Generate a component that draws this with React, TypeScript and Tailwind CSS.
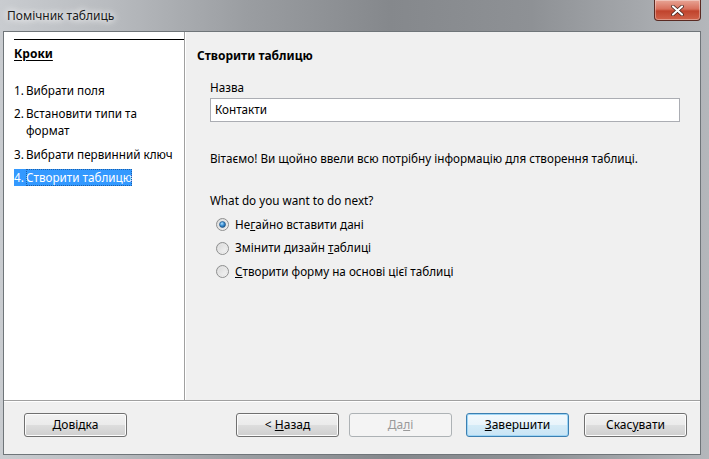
import type { ReactNode } from 'react';

const FONT = "font-['Noto_Sans','Open_Sans',sans-serif]";

function Radio({ checked }: { checked?: boolean }) {
    return (
        <svg width="13" height="13" viewBox="0 0 13 13" className="shrink-0">
            <defs>
                <linearGradient id="rb" x1="0" y1="0" x2="1" y2="1">
                    <stop offset="0" stopColor="#d4d4d4" />
                    <stop offset="1" stopColor="#fafafa" />
                </linearGradient>
                <radialGradient id="rd" cx="0.4" cy="0.35" r="0.7">
                    <stop offset="0" stopColor="#b6e2ff" />
                    <stop offset="0.5" stopColor="#3a8fd3" />
                    <stop offset="1" stopColor="#164f86" />
                </radialGradient>
            </defs>
            <circle cx="6.5" cy="6.5" r="6" fill="url(#rb)" stroke="#8e8f8f" strokeWidth="1" />
            <circle cx="6.5" cy="6.5" r="4.3" fill="none" stroke="#e6e6e6" strokeWidth="1" />
            {checked && <circle cx="6.5" cy="6.5" r="3" fill="url(#rd)" stroke="#1c5180" strokeWidth="0.6" />}
        </svg>
    );
}

function Option({ checked, children }: { checked?: boolean; children: ReactNode }) {
    return (
        <div className="flex items-center gap-[6px] h-[23.5px]">
            <Radio checked={checked} />
            <span>{children}</span>
        </div>
    );
}

function Button({ children, variant = 'normal', className = '' }: { children: ReactNode; variant?: 'normal' | 'default' | 'disabled'; className?: string }) {
    const tone =
        variant === 'disabled'
            ? 'border-[#adb2b5] bg-[#f4f4f4] text-[#9a9a9a]'
            : variant === 'default'
              ? 'border-[#3c7fb1] bg-[linear-gradient(#f2f9fd_0%,#e9f4fb_48%,#d4ebf7_52%,#c9e4f5_100%)] text-black shadow-[inset_0_0_0_1px_#9ed5f5]'
              : 'border-[#707070] bg-[linear-gradient(#f2f2f2_0%,#ebebeb_48%,#dddddd_52%,#cfcfcf_100%)] text-black shadow-[inset_0_0_0_1px_#fcfcfc]';
    return (
        <div className={`w-[103px] h-[24px] rounded-[3px] border flex items-center justify-center text-[12px] ${tone} ${className}`}>
            {children}
        </div>
    );
}

export default function App() {
    return (
        <div
            className={`${FONT} w-[709px] h-[459px] flex flex-col text-[11.7px] text-black bg-[linear-gradient(90deg,#c9ccd0_0%,#b9bcc0_15%,#9a9da1_35%,#85888c_55%,#8e9195_75%,#b4b7bb_100%)]`}
        >
            <div className="h-[31px] flex items-start justify-between pl-[7px] pr-[8px]">
                <span className="mt-[7px] text-[12px] text-[#1a1a1a] [text-shadow:0_0_6px_#ffffff,0_0_10px_#ffffff]">
                    Помічник таблиць
                </span>
                <div className="w-[47px] h-[21px] rounded-b-[4px] border border-t-0 border-[#5a2a22] bg-[linear-gradient(#e8a596_0%,#d8705c_45%,#c0432c_55%,#d0634a_100%)] flex items-center justify-center shadow-[inset_0_0_0_1px_rgba(255,255,255,0.35)]">
                    <svg width="13" height="11" viewBox="0 0 13 11">
                        <path d="M2 1.5 L11 9.5 M11 1.5 L2 9.5" stroke="#3b1d18" strokeWidth="3.6" strokeLinecap="round" />
                        <path d="M2 1.5 L11 9.5 M11 1.5 L2 9.5" stroke="#ffffff" strokeWidth="2.2" strokeLinecap="round" />
                    </svg>
                </div>
            </div>

            <div className="flex-1 ml-[3px] mr-[8px] mb-[4px] border border-[#6f7579] bg-[#f0f0f0] flex flex-col">
                <div className="h-[368px] flex">
                    <div className="w-[181px] bg-white border-r border-[#a0a0a0] pl-[10px] pt-[7px] shrink-0">
                        <div className="border-t border-black pt-[5px] pb-[19px]">
                            <span className="font-bold underline underline-offset-2 text-[12px]">Кроки</span>
                        </div>
                        <div className="flex flex-col gap-[6px] leading-[17px]">
                            <div className="flex">
                                <span className="w-[12px]">1.</span>
                                <span>Вибрати поля</span>
                            </div>
                            <div className="flex">
                                <span className="w-[12px]">2.</span>
                                <span className="w-[150px]">Встановити типи та формат</span>
                            </div>
                            <div className="flex mt-[1px]">
                                <span className="w-[12px]">3.</span>
                                <span>Вибрати первинний ключ</span>
                            </div>
                            <div className="flex self-start bg-[#3399ff] text-white">
                                <span className="w-[12px]">4.</span>
                                <span className="outline outline-1 outline-dotted outline-[#1d5fa8] -outline-offset-1">Створити таблицю</span>
                            </div>
                        </div>
                    </div>
                    <div className="w-[1px] bg-white" />
                    <div className="flex-1 pl-[11px] pt-[15px] pr-[20px]">
                        <div className="font-bold h-[18px] leading-[18px] text-[12px]">Створити таблицю</div>
                        <div className="pl-[13px] mt-[13px]">
                            <div className="h-[18px] leading-[18px]">Назва</div>
                            <div className="mt-[2px] h-[24px] border border-[#abadb3] bg-white flex items-center px-[4px]">
                                Контакти
                            </div>
                            <div className="mt-[27px] h-[18px] leading-[18px]">
                                Вітаємо! Ви щойно ввели всю потрібну інформацію для створення таблиці.
                            </div>
                            <div className="mt-[24px] h-[18px] leading-[18px]">What do you want to do next?</div>
                            <div className="mt-[4px] pl-[6px] flex flex-col">
                                <Option checked>
                                    Не<u>г</u>айно вставити дані
                                </Option>
                                <Option>
                                    Змінити дизайн <u>т</u>аблиці
                                </Option>
                                <Option>
                                    <u>С</u>творити форму на основі цієї таблиці
                                </Option>
                            </div>
                        </div>
                    </div>
                </div>
                <div className="h-[1px] bg-[#a0a0a0]" />
                <div className="h-[1px] bg-white" />
                <div className="flex-1 flex items-start pt-[11px] pl-[20px] pr-[13px]">
                    <Button>
                        <u>Д</u>овідка
                    </Button>
                    <div className="flex-1" />
                    <Button>
                        &lt;&nbsp;<u>Н</u>азад
                    </Button>
                    <Button variant="disabled" className="ml-[10px]">
                        Да<u>л</u>і
                    </Button>
                    <Button variant="default" className="ml-[14px]">
                        <u>З</u>авершити
                    </Button>
                    <Button className="ml-[15px]">
                        Скас<u>у</u>вати
                    </Button>
                </div>
            </div>
        </div>
    );
}
